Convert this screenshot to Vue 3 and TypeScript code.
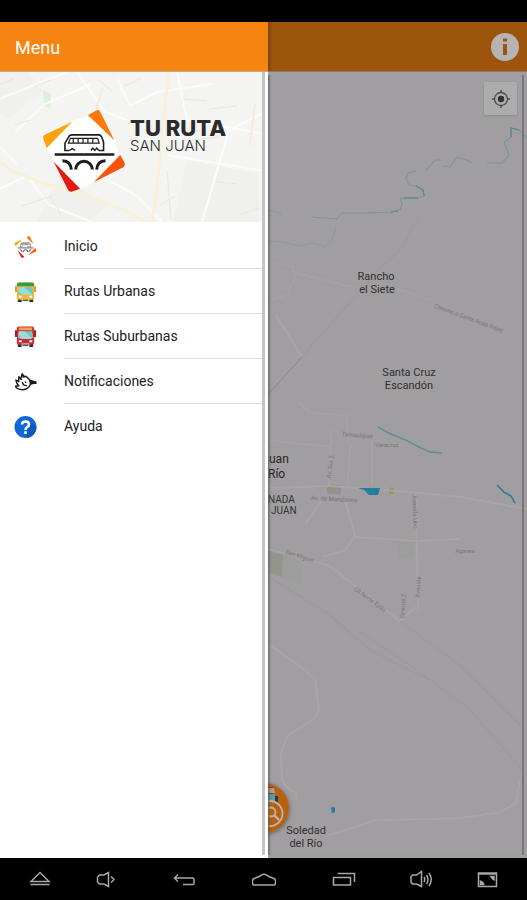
<script setup lang="ts">
interface MenuItem {
  id: string
  label: string
}

interface MapLabel {
  text: string
  x: number
  y: number
  kind: 'town' | 'district' | 'city'
}

interface StreetLabel {
  text: string
  x: number
  y: number
  angle: number
}

const items: MenuItem[] = [
  { id: 'inicio', label: 'Inicio' },
  { id: 'urbanas', label: 'Rutas Urbanas' },
  { id: 'suburbanas', label: 'Rutas Suburbanas' },
  { id: 'notificaciones', label: 'Notificaciones' },
  { id: 'ayuda', label: 'Ayuda' },
]

const labels: MapLabel[] = [
  { text: 'Rancho', x: 376, y: 280, kind: 'town' },
  { text: 'el Siete', x: 377, y: 293, kind: 'town' },
  { text: 'Santa Cruz', x: 409, y: 376, kind: 'town' },
  { text: 'Escandón', x: 409, y: 389, kind: 'town' },
  { text: 'Soledad', x: 306, y: 834, kind: 'town' },
  { text: 'del Río', x: 306, y: 847, kind: 'town' },
  { text: 'uan', x: 269, y: 463, kind: 'city' },
  { text: 'Río', x: 268, y: 478, kind: 'city' },
  { text: 'NADA', x: 268, y: 503, kind: 'district' },
  { text: 'JUAN', x: 271, y: 514, kind: 'district' },
]

const streets: StreetLabel[] = [
  { text: 'Camino a Santa Rosa Xajay', x: 468, y: 320, angle: 20 },
  { text: 'Tamaulipas', x: 357, y: 437, angle: 4 },
  { text: 'Veracruz', x: 387, y: 447, angle: 0 },
  { text: 'Av. Sur 2', x: 332, y: 467, angle: -82 },
  { text: 'Av. de Mandarina', x: 334, y: 501, angle: 3 },
  { text: 'Avenida Uno', x: 413, y: 512, angle: 88 },
  { text: 'Agaves', x: 465, y: 553, angle: 0 },
  { text: 'San Miguel', x: 299, y: 558, angle: 18 },
  { text: 'Cll Norte Ejido', x: 369, y: 601, angle: 36 },
  { text: 'Avenida', x: 420, y: 587, angle: -86 },
  { text: 'Oriente 2', x: 405, y: 606, angle: -86 },
]
</script>

<template>
  <div class="screen">
    <svg class="defs" aria-hidden="true">
      <symbol id="brand" viewBox="40 106 88 90">
        <path fill="#fff" d="M71 121 88 115 101 111 115 139 120 155 125 165 94 183 80 190 53 162 46 148Z" />
        <path fill="#fda20b" d="M42.500 139Q41.500 136 44 134.500L72 121 46 148Z" />
        <path fill="#fb7a0a" d="M88 114.500 96 109.800Q99.500 108 101 111.500L115 140Z" />
        <path fill="#fb5209" d="M121 155 125.500 163Q126.500 166 124 167.500L94 183Z" />
        <path fill="#e41a12" d="M53 162 80 189.500 72 192.500Q69 193.500 67.500 190.500Z" />
        <g fill="none" stroke="#1d1d1d">
          <path stroke-width="1.600" d="M69 150.500H64.500V143L69 135.500Q70 134.500 72 134.500H99Q101 134.500 102 136.500L104 142V150.500H99" />
          <path stroke-width="1.200" d="M70 138H98L99.500 143H68ZM73 138V143M78 138V143M83 138V143M88 138V143M93 138V143" />
          <path stroke-width="1.400" d="M69 150.500 72 148.500 75 150.500M91 150.500 93 148 95 150.500 97 148 99 150.500" />
          <path stroke-width="2.600" d="M54 154.500H115" />
          <path stroke-width="3" d="M62 161Q70.500 161.500 71 170M75.500 170A8.500 8.500 0 0 1 92.500 170M97 170Q97.500 161.500 106 161" />
        </g>
      </symbol>
    </svg>

    <div class="status"></div>

    <div class="body">
      <aside class="drawer">
        <header class="bar menu-bar"><h1>Menu</h1></header>
        <div class="scroller">
          <div class="hero">
            <svg class="hero-map" viewBox="0 72 268 150" preserveAspectRatio="xMidYMid slice" aria-hidden="true">
              <rect y="72" width="268" height="150" fill="#f4f4f2" />
              <path fill="#f0f0ee" d="M0 72H32L45 92 12 118 0 112ZM62 176 110 205 92 222H40ZM190 160 262 174V222H176Z" />
              <path fill="#dcefd7" d="M46 90 54 94 53 108 47 105Z" />
              <g fill="none" stroke="#fbfbfa" stroke-width="2">
                <path d="M0 100 30 88 70 72M18 132 48 104 94 84M120 78 133 106 160 92 215 84M104 176 140 196 165 222M180 72 190 120 268 134M0 190 30 176 52 205 95 222M170 155 268 171M205 222 232 130 268 112M0 144 20 164M80 72 108 112 130 120" />
              </g>
              <g fill="none" stroke="#e6e6e7">
                <path d="M4 84 16 79M38 86 54 80M102 80 116 92M212 109 240 106M186 99 210 101M18 124 34 120M54 198 64 214M170 170 174 220M220 182 240 184M196 140 222 137M25 206 55 196M244 214 262 208M163 205 178 196M128 86 144 78" />
              </g>
              <path fill="none" stroke="#f8f0d8" stroke-width="3" d="M0 159 14 171 44 182 80 193 128 210 148 222M172 72 165 130 160 190 155 222" />
              <path fill="none" stroke="#f6e9e3" stroke-width="2" d="M106 88 98 112M258 104 253 145" />
            </svg>
            <div class="brand">
              <svg class="brand-mark" aria-hidden="true"><use href="#brand" /></svg>
              <div class="brand-name"><strong>TU RUTA</strong><span>SAN JUAN</span></div>
            </div>
          </div>

          <nav class="menu">
            <a v-for="item in items" :key="item.id" href="#" class="item">
              <svg v-if="item.id === 'inicio'" class="icon" aria-hidden="true"><use href="#brand" /></svg>

              <svg v-else-if="item.id === 'urbanas'" class="icon" viewBox="0 0 24 24" aria-hidden="true">
                <path fill="#263238" d="M4 19H8V22.500H4ZM16 19H20V22.500H16Z" />
                <path fill="#e29a1b" d="M1 6H4V12H1ZM20 6H23V12H20Z" />
                <rect x="3" y="2" width="18" height="18" rx="2" fill="#fbb52b" />
                <path fill="#2f9e44" d="M5 2H19Q21 2 21 4V6H3V4Q3 2 5 2Z" />
                <path fill="#6cc9c9" d="M5 7H19L20 14Q12 16 4 14Z" />
                <path fill="#9bdcd8" d="M5 7H11L19 14.500Q14 15.500 8 14.800L4.500 11Z" />
                <path fill="#fff" d="M5 16H8V18H5ZM16 16H19V18H16Z" />
                <path fill="#455a64" d="M9 20H15V21.500H9Z" />
              </svg>

              <svg v-else-if="item.id === 'suburbanas'" class="icon" viewBox="0 0 24 24" aria-hidden="true">
                <path fill="#263238" d="M4 19H8V22.500H4ZM16 19H20V22.500H16Z" />
                <path fill="#a81d22" d="M1 5H4V12H1ZM20 5H23V12H20Z" />
                <rect x="3" y="1" width="18" height="19" rx="2" fill="#d3262c" />
                <path fill="#f0a45a" d="M5 2H19V5H5Z" />
                <path fill="#6cc9c9" d="M5 6H19L20 13Q12 15 4 13Z" />
                <path fill="#9bdcd8" d="M5 6H11L19 13.500Q14 14.500 8 13.800L4.500 10Z" />
                <path fill="#fff" d="M5 15.500H8V17.500H5ZM16 15.500H19V17.500H16Z" />
                <path fill="#b0bec5" d="M8 18.500H16V20H8Z" />
                <path fill="#455a64" d="M9 20H15V21.500H9Z" />
              </svg>

              <svg v-else-if="item.id === 'notificaciones'" class="icon" viewBox="0 0 24 24" aria-hidden="true">
                <g fill="none" stroke="#1a1a1a" stroke-width="1.500" stroke-linejoin="round">
                  <path d="M7 9 8.500 3.500 11 6.500 12.500 6 16.500 10 22.500 12.500 17 14.500Q15 19.500 9 20Q3 20 1.500 16.500L5 16Q2.500 13.500 2 10L5 11.500V6.500L8 10" />
                  <path d="M8.500 12 10 15 13.500 16M12 11.500V13" />
                </g>
                <path fill="#1a1a1a" d="M15.500 10 23.500 11.500V14L16.500 14ZM8 2.500 11 6.500 9 8Z" />
              </svg>

              <svg v-else class="icon" viewBox="0 0 24 24" aria-hidden="true">
                <circle cx="12" cy="12" r="11.500" fill="#1268d6" />
                <path fill="#0d58bd" d="M12 19 18 8 23.500 12A11.500 11.500 0 0 1 14 23.400Z" />
                <path fill="none" stroke="#fff" stroke-width="2.600" d="M8.300 9.500Q8.300 6.200 12 6.200T15.700 9.300Q15.700 11 13.800 12Q12 13 12 15" />
                <rect x="10.600" y="16.400" width="2.800" height="2.800" fill="#fff" />
              </svg>
              <span class="item-label">{{ item.label }}</span>
            </a>
          </nav>
        </div>
      </aside>

      <main class="content">
        <header class="bar content-bar">
          <button class="info" type="button" aria-label="Información">
            <svg viewBox="0 0 28 28" aria-hidden="true">
              <circle cx="14" cy="14" r="14" fill="#b6b4b3" />
              <path fill="#9d540c" d="M12 5.500H16V8.500H12ZM12 11H16V22H12Z" />
            </svg>
          </button>
        </header>

        <div class="map">
          <svg class="map-canvas" viewBox="268 72 259 786" preserveAspectRatio="xMinYMin slice" role="img" aria-label="Mapa">
            <rect x="268" y="72" width="1200" height="1200" fill="#a09ea0" />
            <path fill="#92968a" d="M268 551 283 555 282 577 268 572Z" />
            <path fill="#9d9e9c" d="M283 555 303 562 302 586 282 577ZM398 542H414V558H398Z" />
            <path fill="#939191" d="M327 485H341V494H327Z" />
            <path fill="#96945f" d="M327 485 333 484 334 488 327 489ZM389 489 392 487 395 490 393 494 389 494Z" />

            <g fill="none" stroke="#a7a5a7" stroke-width="2">
              <path d="M268 261 293 267 295 278 288 294 272 300M295 273 348 286 400 290 430 300" stroke="#a4a2a4" />
              <path d="M276 315 302 357" />
              <path d="M302 357 268 394" stroke="#8c8b8d" stroke-width="1" />
              <path d="M302 357 318 338 354 298 374 274 400 250 420 215" stroke="#9b999b" stroke-width="1" />
              <path d="M298 402 310 412 347 416 348 444M268 440 330 447M331 430 329 485M351 443 347 490M372 440V485" stroke="#a5a3a5" />
              <path d="M268 488 330 486 410 492 460 497 527 509M416 492 418 610M345 500 355 535 345 550 322 557M355 537 416 541 460 539M268 549 330 566 360 590 400 621 416 607M322 500 305 524" />
              <path d="M268 644 304 669 315 680 319 710 314 719 288 735 281 753 282 780 290 790 296 792V800" />
              <path d="M325 836 352 828 376 820 460 818 500 812 516 803 520 780" />
              <path d="M360 632 410 665 470 710 527 775M400 621 460 665 525 730" stroke="#9b9a9b" stroke-width="1" />
              <path d="M268 576 330 615 370 650 430 680" stroke="#9a999a" stroke-width="1" />
            </g>
            <g fill="none" stroke="#7b949c" stroke-width="1">
              <path d="M268 210 282 214M268 242 279 241 290 244 300 246 312 243 325 246 333 238 336 226" opacity=".5" />
              <path d="M312 217 337 219 341 213 368 213 392 212 400 210 402 203 400 199 405 198 418 198 424 196 423 190 416 186 409 185 406 179 408 173 416 171" />
              <path d="M426 170 435 160 441 160M443 166 450 167 457 157 467 160 472 163M487 163 502 163 509 155 504 142 511 137 511 128 519 130 527 138" />
            </g>
            <g fill="none" stroke="#578591" stroke-width="1.200">
              <path d="M404 198 418 198M416 186 423 190 424 196M511 137V128L519 130M391 212 398 211" />
            </g>
            <path fill="none" stroke="#5b8d99" stroke-width="1.500" d="M378 427 391 434 408 441 421 448 430 452 442 453" />
            <path fill="none" stroke="#277e95" stroke-width="1.500" d="M497 485 504 492 511 496 515 503" />
            <path fill="#267e9d" d="M358 488 380 488 378 495 369 495 364 490ZM331 807H335V812L332 813Z" />

            <text v-for="s in streets" :key="s.text" class="street" :transform="`translate(${s.x} ${s.y}) rotate(${s.angle})`">{{ s.text }}</text>
            <text v-for="l in labels" :key="l.text + l.y" :x="l.x" :y="l.y" :class="l.kind" :text-anchor="l.kind === 'town' ? 'middle' : 'start'">{{ l.text }}</text>
          </svg>

          <button class="locate" type="button" aria-label="Mi ubicación">
            <svg viewBox="0 0 20 20" aria-hidden="true">
              <circle cx="10" cy="10" r="6.500" fill="none" stroke="#4c4c4c" stroke-width="1.300" />
              <circle cx="10" cy="10" r="3.200" fill="#333" />
              <path stroke="#4c4c4c" stroke-width="1.500" d="M10 1V4M10 16V19M1 10H4M16 10H19" />
            </svg>
          </button>

          <button class="fab" type="button" aria-label="Buscar ruta">
            <svg viewBox="0 0 50 50" aria-hidden="true">
              <circle cx="25" cy="25" r="25" fill="#b7610e" />
              <path fill="#9f2420" d="M20 4H34V22H20Z" />
              <path fill="#a6a097" d="M28 5H35L36 10H28Z" />
              <path fill="#559da4" d="M27 11H36V18H27Z" />
              <path fill="#273744" d="M36 13H39V19H36Z" />
              <circle cx="31" cy="30.500" r="12.500" fill="#b7610e" stroke="#bdb6ad" stroke-width="1.800" />
              <circle cx="32" cy="29" r="4.500" fill="none" stroke="#bdb6ad" stroke-width="1.800" />
              <path stroke="#bdb6ad" stroke-width="2.400" d="M35 32 40 37" />
            </svg>
          </button>
        </div>
      </main>
    </div>

    <footer class="system">
      <div class="group side">
        <button type="button" aria-label="Aplicaciones">
          <svg viewBox="0 0 24 24" aria-hidden="true"><path d="M3 14.500 12 5.500 21 14.500ZM2.500 17.500H21.500" /></svg>
        </button>
        <button type="button" aria-label="Bajar volumen">
          <svg viewBox="0 0 24 24" aria-hidden="true"><path d="M5.500 8 3.500 10V15L5.500 17H10L14.500 19.500V5.500L10 8ZM17 9.500 20 12.500 17 15.500" /></svg>
        </button>
      </div>
      <div class="group middle">
        <button type="button" aria-label="Atrás">
          <svg viewBox="0 0 24 24" aria-hidden="true"><path d="M6 7.500 2.500 11 6 14.500M2.500 11H20.500Q22 11 22 12.500V16Q22 17.500 20.500 17.500H11" /></svg>
        </button>
        <button type="button" aria-label="Inicio">
          <svg viewBox="0 0 24 24" aria-hidden="true"><path d="M2 18Q.500 18 .500 16V13.500Q.500 11.500 3.500 11L8 9Q12 5.500 16 9L20.500 11Q23.500 11.500 23.500 13.500V16Q23.500 18 22 18Z" /></svg>
        </button>
        <button type="button" aria-label="Recientes">
          <svg viewBox="0 0 24 24" aria-hidden="true"><path d="M1.500 10.500H18.500V18H1.500ZM5.500 6.500H22.500V15" /></svg>
        </button>
      </div>
      <div class="group side">
        <button type="button" aria-label="Subir volumen">
          <svg viewBox="0 0 24 24" aria-hidden="true"><path d="M3.500 8 2 9.500V15L3.500 17H7.500L12.500 19.500V4.500L7.500 8ZM15 10Q16.500 12.500 15 15M17.500 8Q20.500 12.500 17.500 17M20 6Q24.500 12.500 20 19" /></svg>
        </button>
        <button type="button" aria-label="Captura de pantalla">
          <svg viewBox="0 0 24 24" aria-hidden="true"><path d="M3.500 6H21.500V19.500H3.500ZM3.500 7H21.500M6 14 9 17M16 10 19 13" /><path class="solid" d="M5.500 14.500 8.500 17.500H5.500ZM16 9.500H19V12.500Z" /></svg>
        </button>
      </div>
    </footer>
  </div>
</template>

<style>
body {
  margin: 0;
  background: #000;
}
</style>

<style scoped>
.screen {
  display: grid;
  grid-template-rows: 22px 1fr 42px;
  min-height: 100vh;
  box-sizing: border-box;
  background: #000;
  font-family: Roboto, "Liberation Sans", sans-serif;
}

.defs {
  position: absolute;
  width: 0;
  height: 0;
}

button {
  display: grid;
  place-items: center;
  margin: 0;
  padding: 0;
  border: 0;
  background: none;
  cursor: pointer;
}

.body {
  display: grid;
  grid-template-columns: 60fr 58fr;
}

.drawer {
  display: flex;
  flex-direction: column;
  background: #fff;
}

.bar {
  display: flex;
  align-items: center;
  height: 49px;
  padding: 0 15px;
  border-bottom: 1px solid #c9a98a;
}

.menu-bar {
  background: #f68410;
}

h1 {
  margin: 0;
  padding-top: 2px;
  color: #fff;
  font-size: 18px;
  font-weight: 400;
}

.scroller {
  flex: 1;
  margin: 0 3px 3px 0;
  border-right: 3px solid #c4c4c4;
}

.hero {
  position: relative;
  display: flex;
  align-items: center;
  height: 150px;
  overflow: hidden;
}

.hero-map {
  position: absolute;
  inset: 0;
  width: 100%;
  height: 100%;
}

.brand {
  position: relative;
  display: flex;
  gap: 2px;
  padding: 8px 0 0 40px;
}

.brand-mark {
  flex: none;
  width: 88px;
  height: 88px;
}

.brand-name {
  display: flex;
  flex-direction: column;
  padding-top: 11px;
  color: #2b2b2b;
  font-family: Inter, Roboto, sans-serif;
  white-space: nowrap;
}

.brand-name strong {
  font-size: 22px;
  font-weight: 800;
  line-height: 20px;
}

.brand-name span {
  font-size: 15px;
  font-weight: 300;
  line-height: 16px;
}

.menu {
  display: flex;
  flex-direction: column;
  padding-top: 2px;
}

.item {
  display: flex;
  align-items: center;
  height: 45px;
  padding-left: 14px;
  gap: 27px;
  color: #222;
  text-decoration: none;
}

.icon {
  flex: none;
  width: 23px;
  height: 24px;
}

.item-label {
  flex: 1;
  box-sizing: border-box;
  height: 45px;
  border-bottom: 1px solid #dedede;
  font-size: 14px;
  line-height: 45px;
}

.item:last-child .item-label {
  border-bottom: 0;
}

.content {
  display: flex;
  flex-direction: column;
  overflow: hidden;
  background: #a09ea0;
}

.content-bar {
  justify-content: flex-end;
  padding: 0 8px;
  border-bottom-color: #8f7760;
  background: linear-gradient(to right, #7d430a, #9d540c 4px);
}

.info svg {
  display: block;
  width: 28px;
  height: 28px;
}

.map {
  position: relative;
  flex: 1;
  overflow: hidden;
}

.map::after {
  content: "";
  position: absolute;
  inset: 3px 3px 3px 0;
  border-right: 2px solid #787779;
  box-shadow: inset 3px 0 3px -2px #555;
  pointer-events: none;
}

.map-canvas {
  position: absolute;
  inset: 0;
  width: 100%;
  height: 100%;
}

.town {
  fill: #303030;
  font-size: 11px;
}

.city {
  fill: #252525;
  font-size: 12px;
}

.district {
  fill: #353535;
  font-size: 10px;
}

.street {
  fill: #777577;
  font-size: 6px;
  text-anchor: middle;
}

.locate {
  position: absolute;
  top: 10px;
  right: 10px;
  width: 33px;
  height: 33px;
  background: #adacad;
  box-shadow: 0 1px 2px #8a8a8a;
}

.locate svg {
  width: 20px;
  height: 20px;
}

.fab {
  position: absolute;
  bottom: 25px;
  left: -29px;
  width: 50px;
  height: 50px;
  border-radius: 50%;
  box-shadow: 0 1px 4px #555;
}

.fab svg {
  width: 50px;
  height: 50px;
}

.system {
  display: flex;
  justify-content: space-between;
  padding: 0 7px;
  background: #000;
}

.group {
  display: flex;
}

.side button {
  width: 66px;
}

.middle button {
  width: 80px;
}

.system svg {
  width: 24px;
  height: 24px;
  fill: none;
  stroke: #a8a8a8;
  stroke-width: 1.5;
}

.system .solid {
  fill: #a8a8a8;
}
</style>
